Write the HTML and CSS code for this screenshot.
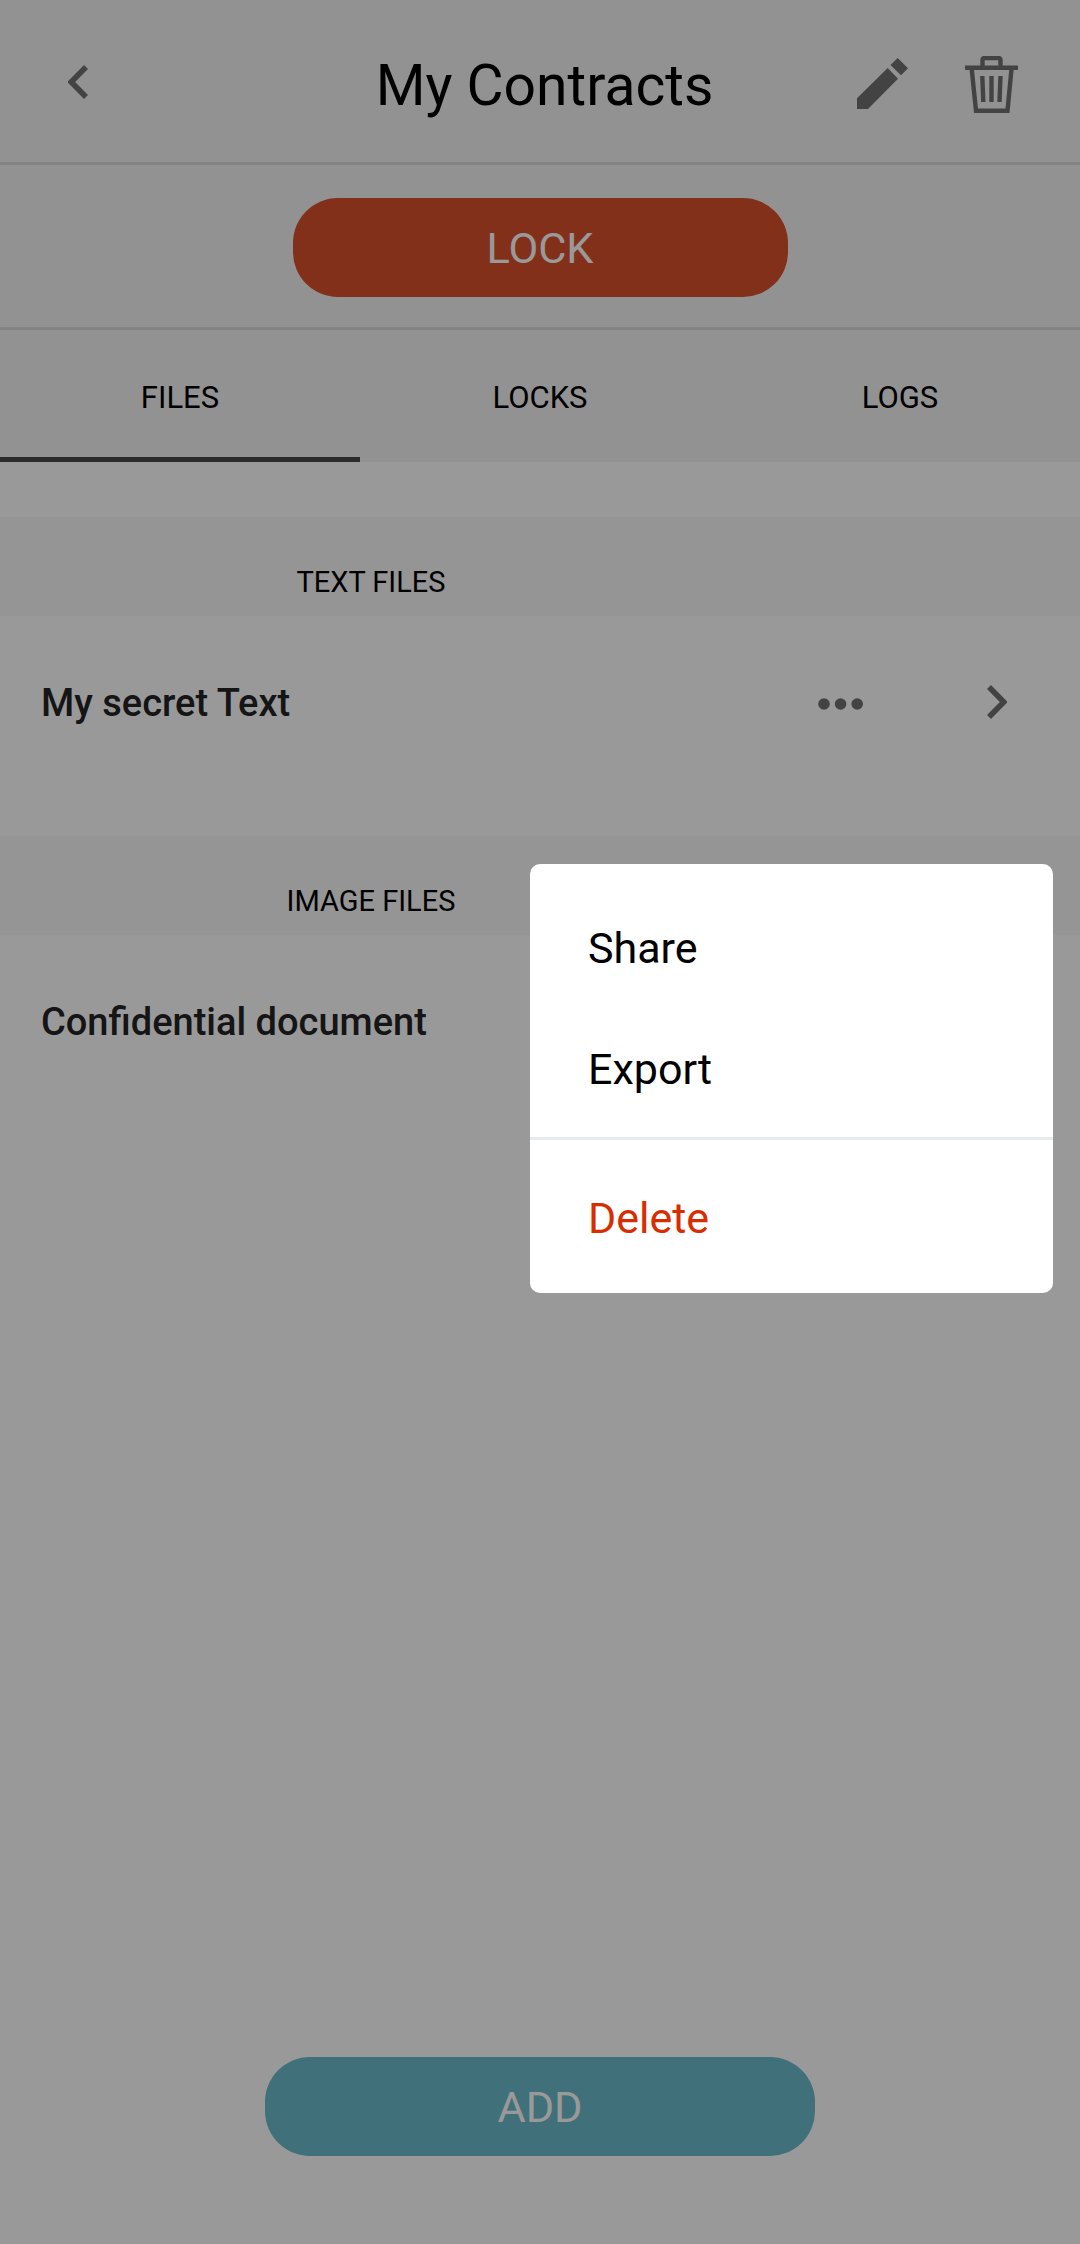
FILE: index.html
```html
<!DOCTYPE html>
<html lang="en">
<head>
<meta charset="utf-8">
<title>My Contracts</title>
<link rel="stylesheet" href="styles.css">
</head>
<body>
<div class="screen">
  <header class="header">
    <svg class="icon back" viewBox="0 0 20 34"><path d="M18 2 3.2 17 18 32"/></svg>
    <h1 class="title">My Contracts</h1>
    <div class="actions">
      <svg class="icon-fill pencil" viewBox="0 0 51 52"><path d="M0 40.3 30.7 10 41 20.7 11 51H0zM33.5 7 40.7 0 51 10.3 44 17.3z"/></svg>
      <svg class="icon trash" viewBox="0 0 54 58"><path d="M0 11.8h53M17.5 11V4.500q0-2.500 2.500-2.500H33q2.500 0 2.500 2.500V11M6.700 13 11 54.700H42.500L46.500 13M17.300 20l1 26M26.500 20v26M35.500 20l-1 26"/></svg>
    </div>
  </header>
  <div class="lock-bar"><button class="btn btn-lock">LOCK</button></div>
  <nav class="tabs">
    <a class="tab active">FILES</a>
    <a class="tab">LOCKS</a>
    <a class="tab">LOGS</a>
  </nav>
  <main class="content">
    <h2 class="section"><span class="section-label">TEXT FILES</span></h2>
    <div class="row">
      <span class="name">My secret Text</span>
      <svg class="icon-fill dots" viewBox="0 0 46 12"><circle cx="6" cy="6" r="5.800"/><circle cx="22.600" cy="6" r="5.800"/><circle cx="39.200" cy="6" r="5.800"/></svg>
      <svg class="icon next" viewBox="0 0 20 34"><path d="M2 2 16.800 17 2 32"/></svg>
    </div>
    <h2 class="section"><span class="section-label">IMAGE FILES</span></h2>
    <div class="row"><span class="name">Confidential document</span></div>
  </main>
  <footer class="footer"><button class="btn btn-add">ADD</button></footer>
  <div class="overlay"></div>
  <div class="menu">
    <div class="menu-group">
      <div class="menu-item">Share</div>
      <div class="menu-item">Export</div>
    </div>
    <div class="menu-item danger">Delete</div>
  </div>
</div>
</body>
</html>
```
FILE: styles.css
```css
* { box-sizing: border-box; }
body { margin: 0; font-family: Roboto, sans-serif; color: #000; }
.screen {
  position: relative;
  display: flex;
  flex-direction: column;
  width: 1080px;
  height: 2244px;
  background: #fff;
  overflow: hidden;
}
.header {
  display: grid;
  grid-template-columns: 252px 1fr 250px;
  height: 165px;
  padding: 0 61px 0 68px;
  background: #f3f3f3;
  border-bottom: 3px solid #dbdbdb;
}
.icon { fill: none; stroke: #717171; stroke-width: 5.6; }
.icon-fill { fill: #717171; }
.back { width: 20px; height: 34px; margin-top: 65px; }
.title {
  margin: 0;
  padding-top: 6px;
  font-size: 57px;
  font-weight: 400;
  line-height: 160px;
  text-align: center;
  white-space: nowrap;
  justify-self: center;
}
.actions { display: flex; justify-content: flex-end; gap: 57px; }
.pencil { width: 51px; height: 52px; margin-top: 58px; }
.trash { width: 54px; height: 58px; margin-top: 56px; stroke-width: 4.4; }
.lock-bar {
  display: flex;
  justify-content: center;
  height: 165px;
  padding-top: 33px;
  background: #f3f3f3;
  border-bottom: 3px solid #dbdbdb;
}
.btn {
  height: 99px;
  padding: 3px 0 0;
  border: 0;
  border-radius: 45px;
  color: #fff;
  font: 400 43.3px/96px Roboto, sans-serif;
}
.btn-lock { width: 495px; background: #db502d; }
.btn-add { width: 550px; background: #6bbbca; }
.tabs { display: flex; height: 132px; background: #f3f3f3; }
.tab {
  flex: 1;
  font-size: 31px;
  line-height: 127px;
  padding-top: 4px;
  text-align: center;
  border-bottom: 5px solid transparent;
}
.tab.active { border-color: #484848; }
.content { flex: 1; padding-top: 55px; }
.section {
  display: flex;
  height: 99px;
  margin: 0;
  padding-top: 28px;
  background: #f8f8f8;
  font-size: 29px;
  font-weight: 400;
  line-height: 74px;
}
.section-label { width: 742px; text-align: center; }
.row {
  display: flex;
  height: 220px;
  padding: 0 73px 0 41px;
}
.name {
  flex: 1;
  color: #232323;
  font-size: 38px;
  font-weight: 500;
  line-height: 174px;
}
.dots { width: 46px; height: 12px; margin: 82px 123px 0 0; }
.next { width: 20px; height: 34px; margin-top: 69px; }
.footer { display: flex; justify-content: center; height: 187px; }
.overlay { position: absolute; inset: 0; background: rgba(0, 0, 0, 0.4); }
.menu {
  position: absolute;
  left: 530px;
  top: 864px;
  width: 523px;
  height: 429px;
  background: #fff;
  border-radius: 10px;
  font-size: 43px;
  line-height: 121px;
}
.menu-group { height: 276px; padding-top: 24px; border-bottom: 3px solid #e4eaed; }
.menu-item { padding-left: 58px; }
.danger { padding-top: 18px; color: #d62e00; }
```
